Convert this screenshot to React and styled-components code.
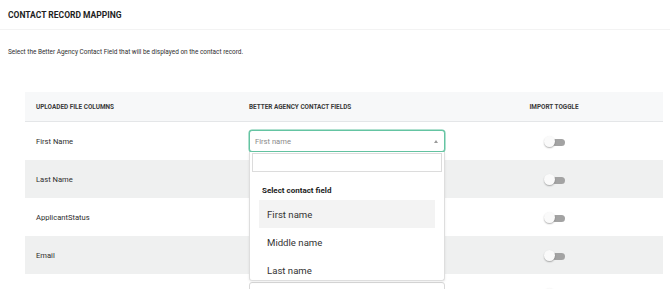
import React from 'react'
import styled, { createGlobalStyle } from 'styled-components'

const GlobalStyle = createGlobalStyle`
	body {
		margin: 0;
		background: #ffffff;
		font-family: Roboto, 'Liberation Sans', sans-serif;
		color: #2b2b2b;
	}
`

const Page = styled.div`
	width: 670px;
	height: 289px;
	overflow: hidden;
	background: #ffffff;
`

const TitleBar = styled.div`
	height: 29px;
	padding: 0 8px;
	display: flex;
	align-items: center;
	border-bottom: 1px solid #f3f3f3;
`

const Title = styled.h1`
	margin: 0;
	font-size: 8.5px;
	font-weight: 700;
	color: #1e1e1e;
`

const Intro = styled.p`
	margin: 0;
	padding: 17px 8px 0;
	height: 46px;
	box-sizing: border-box;
	font-size: 6.45px;
	line-height: 10px;
	color: #2f2f2f;
`

const Table = styled.div`
	margin: 16px 7px 0 25px;
	position: relative;
`

const Row = styled.div`
	display: grid;
	grid-template-columns: 224px 196px 1fr;
	align-items: center;
	height: ${(p) => (p.$head ? '29px' : '38px')};
	background: ${(p) => (p.$head ? '#f7f8f9' : p.$shaded ? '#eff0f0' : '#ffffff')};
	border-bottom: ${(p) => (p.$head ? '1px solid #e4e6e8' : 'none')};
`

const HeadCell = styled.div`
	font-size: 6.4px;
	font-weight: 700;
	color: #3a3a3a;
	padding-left: ${(p) => (p.$first ? '11px' : '0')};
	text-align: ${(p) => (p.$center ? 'center' : 'left')};
`

const NameCell = styled.div`
	padding-left: 11px;
	font-size: 7.6px;
	color: #2d2d2d;
`

const Select = styled.div`
	height: 22px;
	box-sizing: border-box;
	display: flex;
	align-items: center;
	justify-content: space-between;
	padding: 0 5px;
	border: 1px solid ${(p) => (p.$open ? '#64c4a2' : '#d9d9d9')};
	box-shadow: ${(p) => (p.$open ? '0 0 0 0.5px #64c4a2' : 'none')};
	border-radius: 3px;
	background: #ffffff;
	font-size: 7.6px;
	color: #8a8a8a;
`

const Caret = styled.span`
	width: 0;
	height: 0;
	border-left: 2px solid transparent;
	border-right: 2px solid transparent;
	border-bottom: 3px solid #9a9a9a;
	margin-right: 1px;
`

const ToggleCell = styled.div`
	display: flex;
	justify-content: center;
	padding-top: 2px;
`

const Toggle = styled.div`
	position: relative;
	width: 21px;
	height: 12px;
	display: flex;
	align-items: center;
	justify-content: flex-end;
`

const Track = styled.span`
	width: 13px;
	height: 7px;
	border-radius: 4px;
	background: #a3a3a3;
`

const Knob = styled.span`
	position: absolute;
	left: 0;
	top: 0;
	width: 11px;
	height: 11px;
	border-radius: 50%;
	background: #fafafa;
	box-shadow: 0 1px 1.5px rgba(0, 0, 0, 0.3);
`

const Menu = styled.div`
	position: absolute;
	left: 224px;
	top: 60px;
	width: 196px;
	height: 129px;
	box-sizing: border-box;
	background: #ffffff;
	border: 1px solid #dedede;
	border-top: none;
	border-radius: 0 0 3px 3px;
	box-shadow: 0 1px 3px rgba(0, 0, 0, 0.08);
	padding: 1px 2px 0;
`

const Search = styled.div`
	height: 19px;
	box-sizing: border-box;
	border: 1px solid #dcdcdc;
`

const GroupLabel = styled.div`
	margin: 14px 0 0 10px;
	font-size: 8px;
	font-weight: 700;
	color: #1c1c1c;
	height: 10px;
	line-height: 10px;
`

const Options = styled.div`
	margin: 4px 7px 0;
`

const Option = styled.div`
	height: 28px;
	display: flex;
	align-items: center;
	padding-left: 8px;
	font-size: 9.6px;
	color: #333333;
	background: ${(p) => (p.$active ? '#f3f3f3' : 'transparent')};
`

const rows = ['First Name', 'Last Name', 'ApplicantStatus', 'Email', '']

const App = () => {
	return (
		<Page>
			<GlobalStyle />
			<TitleBar>
				<Title>CONTACT RECORD MAPPING</Title>
			</TitleBar>
			<Intro>
				Select the Better Agency Contact Field that will be displayed on
				the contact record.
			</Intro>
			<Table>
				<Row $head>
					<HeadCell $first>UPLOADED FILE COLUMNS</HeadCell>
					<HeadCell>BETTER AGENCY CONTACT FIELDS</HeadCell>
					<HeadCell $center>IMPORT TOGGLE</HeadCell>
				</Row>
				{rows.map((name, i) => (
					<Row key={i} $shaded={i % 2 === 1}>
						<NameCell>{name}</NameCell>
						<Select $open={i === 0}>
							{i === 0 ? 'First name' : ''}
							<Caret />
						</Select>
						<ToggleCell>
							<Toggle>
								<Track />
								<Knob />
							</Toggle>
						</ToggleCell>
					</Row>
				))}
				<Menu>
					<Search />
					<GroupLabel>Select contact field</GroupLabel>
					<Options>
						<Option $active>First name</Option>
						<Option>Middle name</Option>
						<Option>Last name</Option>
					</Options>
				</Menu>
			</Table>
		</Page>
	)
}

export default App
